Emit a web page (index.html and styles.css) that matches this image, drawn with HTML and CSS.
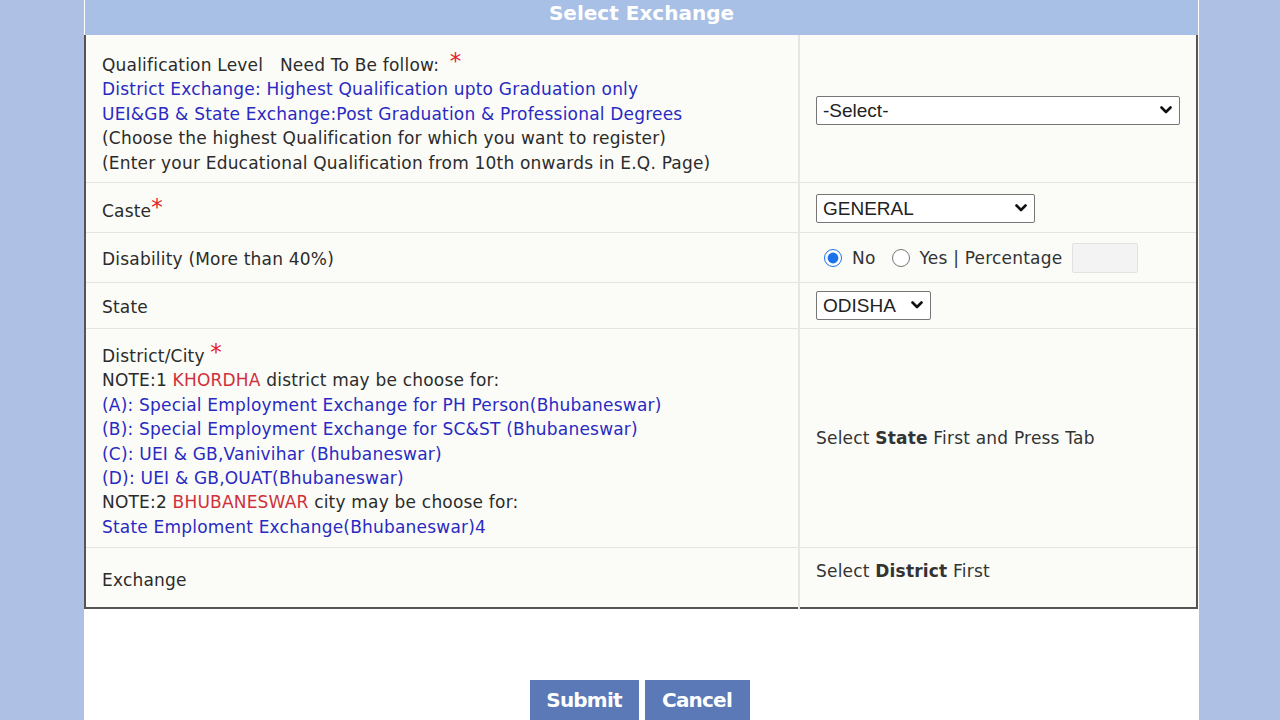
FILE: index.html
```html
<!DOCTYPE html>
<html lang="en">
<head>
    <meta charset="UTF-8">
    <title>Select Exchange</title>
    <link rel="stylesheet" href="styles.css">
</head>
<body>
    <div class="page">
        <div class="panel">
            <div class="title">Select Exchange</div>
            <table class="form-table">
                <tr class="row-qual">
                    <td class="label-cell">
                        Qualification Level &nbsp; Need To Be follow: <span class="req wide">*</span><br>
                        <span class="blue">District Exchange: Highest Qualification upto Graduation only</span><br>
                        <span class="blue">UEI&amp;GB &amp; State Exchange:Post Graduation &amp; Professional Degrees</span><br>
                        (Choose the highest Qualification for which you want to register)<br>
                        (Enter your Educational Qualification from 10th onwards in E.Q. Page)
                    </td>
                    <td class="field-cell">
                        <span class="sel-wrap sel-wide">
                            <select class="sel"><option>-Select-</option></select>
                            <svg class="chev" viewBox="0 0 12 8"><path d="M1.5 1.5 L6 6 L10.5 1.5" /></svg>
                        </span>
                    </td>
                </tr>
                <tr class="row-caste">
                    <td class="label-cell">Caste<span class="req">*</span></td>
                    <td class="field-cell">
                        <span class="sel-wrap sel-caste">
                            <select class="sel"><option>GENERAL</option></select>
                            <svg class="chev" viewBox="0 0 12 8"><path d="M1.5 1.5 L6 6 L10.5 1.5" /></svg>
                        </span>
                    </td>
                </tr>
                <tr class="row-dis">
                    <td class="label-cell">Disability (More than 40%)</td>
                    <td class="field-cell">
                        <div class="radios">
                            <input type="radio" name="dis" id="disNo" checked>
                            <label for="disNo">No</label>
                            <input type="radio" name="dis" id="disYes">
                            <label for="disYes">Yes | Percentage</label>
                            <input type="text" class="pct" disabled>
                        </div>
                    </td>
                </tr>
                <tr class="row-state">
                    <td class="label-cell">State</td>
                    <td class="field-cell">
                        <span class="sel-wrap sel-state">
                            <select class="sel"><option>ODISHA</option></select>
                            <svg class="chev" viewBox="0 0 12 8"><path d="M1.5 1.5 L6 6 L10.5 1.5" /></svg>
                        </span>
                    </td>
                </tr>
                <tr class="row-district">
                    <td class="label-cell">
                        District/City <span class="req">*</span><br>
                        NOTE:1 <span class="red">KHORDHA</span> district may be choose for:<br>
                        <span class="blue">(A): Special Employment Exchange for PH Person(Bhubaneswar)</span><br>
                        <span class="blue">(B): Special Employment Exchange for SC&amp;ST (Bhubaneswar)</span><br>
                        <span class="blue">(C): UEI &amp; GB,Vanivihar (Bhubaneswar)</span><br>
                        <span class="blue">(D): UEI &amp; GB,OUAT(Bhubaneswar)</span><br>
                        NOTE:2 <span class="red">BHUBANESWAR</span> city may be choose for:<br>
                        <span class="blue">State Emploment Exchange(Bhubaneswar)4</span>
                    </td>
                    <td class="field-cell">Select <b>State</b> First and Press Tab</td>
                </tr>
                <tr class="row-exchange">
                    <td class="label-cell">Exchange</td>
                    <td class="field-cell top">Select <b>District</b> First</td>
                </tr>
            </table>
            <div class="actions">
                <button class="btn btn-submit">Submit</button>
                <button class="btn btn-cancel">Cancel</button>
            </div>
        </div>
    </div>
</body>
</html>
```

FILE: styles.css
```css
/* base */
body {
    margin: 0;
    background-color: #aec0e3;
    font-family: "DejaVu Sans", Tahoma, sans-serif;
    color: #222;
}

.page {
    display: flex;
    justify-content: center;
}

/* white panel in the middle */
.panel {
    width: 1115px;
    height: 720px;
    margin-left: 3px;
    background: #fff;
    overflow: hidden;
}

.title {
    height: 35px;
    background-color: #a8bfe6;
    color: #fff;
    font-weight: bold;
    font-size: 20px;
    line-height: 27px;
    text-align: center;
    margin: 0 1px;
}

/* form table */
.form-table {
    width: 1114px;
    border-collapse: collapse;
    background-color: #fbfcf8;
    border-left: 2px solid #555;
    border-right: 2px solid #555;
    border-bottom: 2px solid #555;
    font-size: 17px;
    letter-spacing: 0.2px;
}
.form-table td {
    border-top: 1px solid #e4e5e2;
    vertical-align: middle;
    line-height: 24.4px;
}
.label-cell {
    width: 680px;
    padding: 7px 16px 0;
    border-right: 2px solid #e6e7e4;
    color: #2b2b2b;
}
.field-cell {
    padding: 0 16px;
    color: #333;
}
.form-table td.field-cell.top {
    vertical-align: top;
    padding-top: 11px;
}
.form-table tr:first-child td { border-top: none; }

/* row heights */
.row-qual td { height: 143px; padding-top: 4px; }
.row-qual td.label-cell { height: 136px; padding-top: 11px; }
.row-caste td { height: 49px; }
.row-caste td.label-cell { height: 42px; }
.row-dis td { height: 49px; }
.row-dis td.label-cell { height: 46px; padding-top: 3px; }
.row-state td { height: 45px; }
.row-state td.label-cell { height: 42px; padding-top: 3px; }
.row-district td { height: 218px; }
.row-district td.label-cell { height: 211px; }
.row-exchange td.label-cell { height: 54px; padding-top: 5px; }
.row-exchange td.field-cell { height: 48px; }

.blue { color: #2a2ac2; }
.red { color: #d0303a; }
.req {
    color: #e8202a;
    font-size: 23px;
    position: relative;
    top: -2px;
    line-height: 0;
}
.req.wide { margin-left: 5px; }

/* selects with chevron */
.sel-wrap {
    position: relative;
    display: inline-block;
    vertical-align: middle;
}
.sel {
    appearance: none;
    -webkit-appearance: none;
    width: 100%;
    font-family: "Liberation Sans", Arial, sans-serif;
    font-size: 19px;
    letter-spacing: 0;
    height: 29px;
    border: 1px solid #767676;
    border-radius: 2px;
    background: #fff;
    color: #222;
    padding: 0 24px 0 6px;
}
.chev {
    position: absolute;
    right: 8px;
    top: 10px;
    width: 12px;
    height: 8px;
    pointer-events: none;
}
.chev path {
    fill: none;
    stroke: #111;
    stroke-width: 2.6;
    stroke-linecap: round;
    stroke-linejoin: round;
}
.sel-wide { width: 364px; margin-top: 0; }
.sel-caste { width: 219px; margin-top: 2px; }
.sel-state { width: 115px; }

/* radios */
.radios {
    display: flex;
    align-items: center;
    margin-top: 1px;
}
.radios input[type="radio"] {
    width: 18px;
    height: 18px;
    margin: 0 10px 0 8px;
    accent-color: #1a73e8;
}
.radios label { margin-right: 8px; }
.radios label:last-of-type { margin-right: 0; }
.pct {
    width: 66px;
    height: 30px;
    margin-left: 10px;
    border: 1px solid #e2e2e2;
    border-radius: 2px;
    background: #f3f3f3;
    box-sizing: border-box;
}

/* buttons */
.actions {
    display: flex;
    justify-content: center;
    gap: 6px;
    padding-top: 71px;
    padding-right: 4px;
}
.btn {
    background-color: #5a79b6;
    color: #fff;
    border: none;
    font-family: "DejaVu Sans", Verdana, sans-serif;
    font-weight: bold;
    font-size: 20px;
    height: 46px;
    padding: 0 0 6px;
    letter-spacing: -0.8px;
}
.btn-submit { width: 109px; }
.btn-cancel { width: 105px; }
```
